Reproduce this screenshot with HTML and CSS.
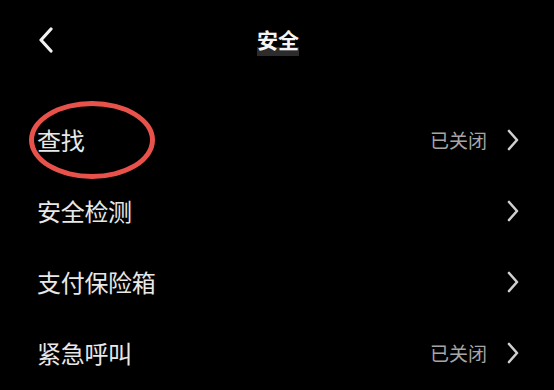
FILE: index.html
```html
<!DOCTYPE html>
<html lang="zh-CN">

<head>
  <meta charset="UTF-8">
  <meta name="viewport" content="width=device-width, initial-scale=1">
  <title>安全</title>
  <link rel="stylesheet" href="styles.css">
</head>

<body>

  <header class="topbar">
    <a class="back" href="#" aria-label="返回">
      <svg width="16" height="26" viewBox="0 0 16 26">
        <polyline points="13,2 3,13 13,24" fill="none" stroke="#f2f2f2" stroke-width="3.2" stroke-linecap="round" stroke-linejoin="round"/>
      </svg>
    </a>
    <h1 class="title"><span>安全</span></h1>
    <span class="spacer"></span>
  </header>

  <ul class="list">
    <li class="row">
      <span class="label">查找</span>
      <span class="status">已关闭</span>
      <svg class="arrow" width="14" height="22" viewBox="0 0 14 22">
        <polyline points="3,2 11,11 3,20" fill="none" stroke="#d0d0d0" stroke-width="2.6" stroke-linecap="round" stroke-linejoin="round"/>
      </svg>
      <span class="ring"></span>
    </li>
    <li class="row">
      <span class="label">安全检测</span>
      <svg class="arrow" width="14" height="22" viewBox="0 0 14 22">
        <polyline points="3,2 11,11 3,20" fill="none" stroke="#d0d0d0" stroke-width="2.6" stroke-linecap="round" stroke-linejoin="round"/>
      </svg>
    </li>
    <li class="row">
      <span class="label">支付保险箱</span>
      <svg class="arrow" width="14" height="22" viewBox="0 0 14 22">
        <polyline points="3,2 11,11 3,20" fill="none" stroke="#d0d0d0" stroke-width="2.6" stroke-linecap="round" stroke-linejoin="round"/>
      </svg>
    </li>
    <li class="row">
      <span class="label">紧急呼叫</span>
      <span class="status">已关闭</span>
      <svg class="arrow" width="14" height="22" viewBox="0 0 14 22">
        <polyline points="3,2 11,11 3,20" fill="none" stroke="#d0d0d0" stroke-width="2.6" stroke-linecap="round" stroke-linejoin="round"/>
      </svg>
    </li>
  </ul>

</body>

</html>
```

FILE: styles.css
```css
html {
  background: #000;
}

body {
  background: #000;
  color: #e8e8e8;
  font-family: "Noto Sans CJK SC", "Noto Sans", sans-serif;
  margin: 0;
  height: 390px;
  overflow: hidden;
}

.topbar {
  align-items: center;
  display: flex;
  height: 80px;
  padding: 0 36px 0 38px;
}

.back {
  display: flex;
  width: 40px;
}

.title {
  color: #f4f4f4;
  flex: 1;
  font-size: 21px;
  font-weight: bold;
  margin: 0;
  text-align: center;
}

.title span {
  background: linear-gradient(to bottom, transparent 72%, #2c2c2c 72%);
  display: inline-block;
  line-height: 30px;
  padding-bottom: 2px;
}

.spacer {
  width: 40px;
}

.list {
  list-style: none;
  margin: 0;
  padding: 24px 0 0;
}

.row {
  align-items: center;
  display: flex;
  height: 71px;
  padding: 0 34px 0 37px;
  position: relative;
}

.label {
  flex: 1;
  font-size: 24px;
  letter-spacing: -0.3px;
}

.status {
  color: #a6a6a6;
  font-size: 19px;
  margin-right: 19px;
}

.arrow {
  display: block;
}

.ring {
  border: 5px solid #e9524b;
  border-radius: 50%;
  height: 68px;
  left: 29px;
  position: absolute;
  top: -3px;
  width: 116px;
}
```
